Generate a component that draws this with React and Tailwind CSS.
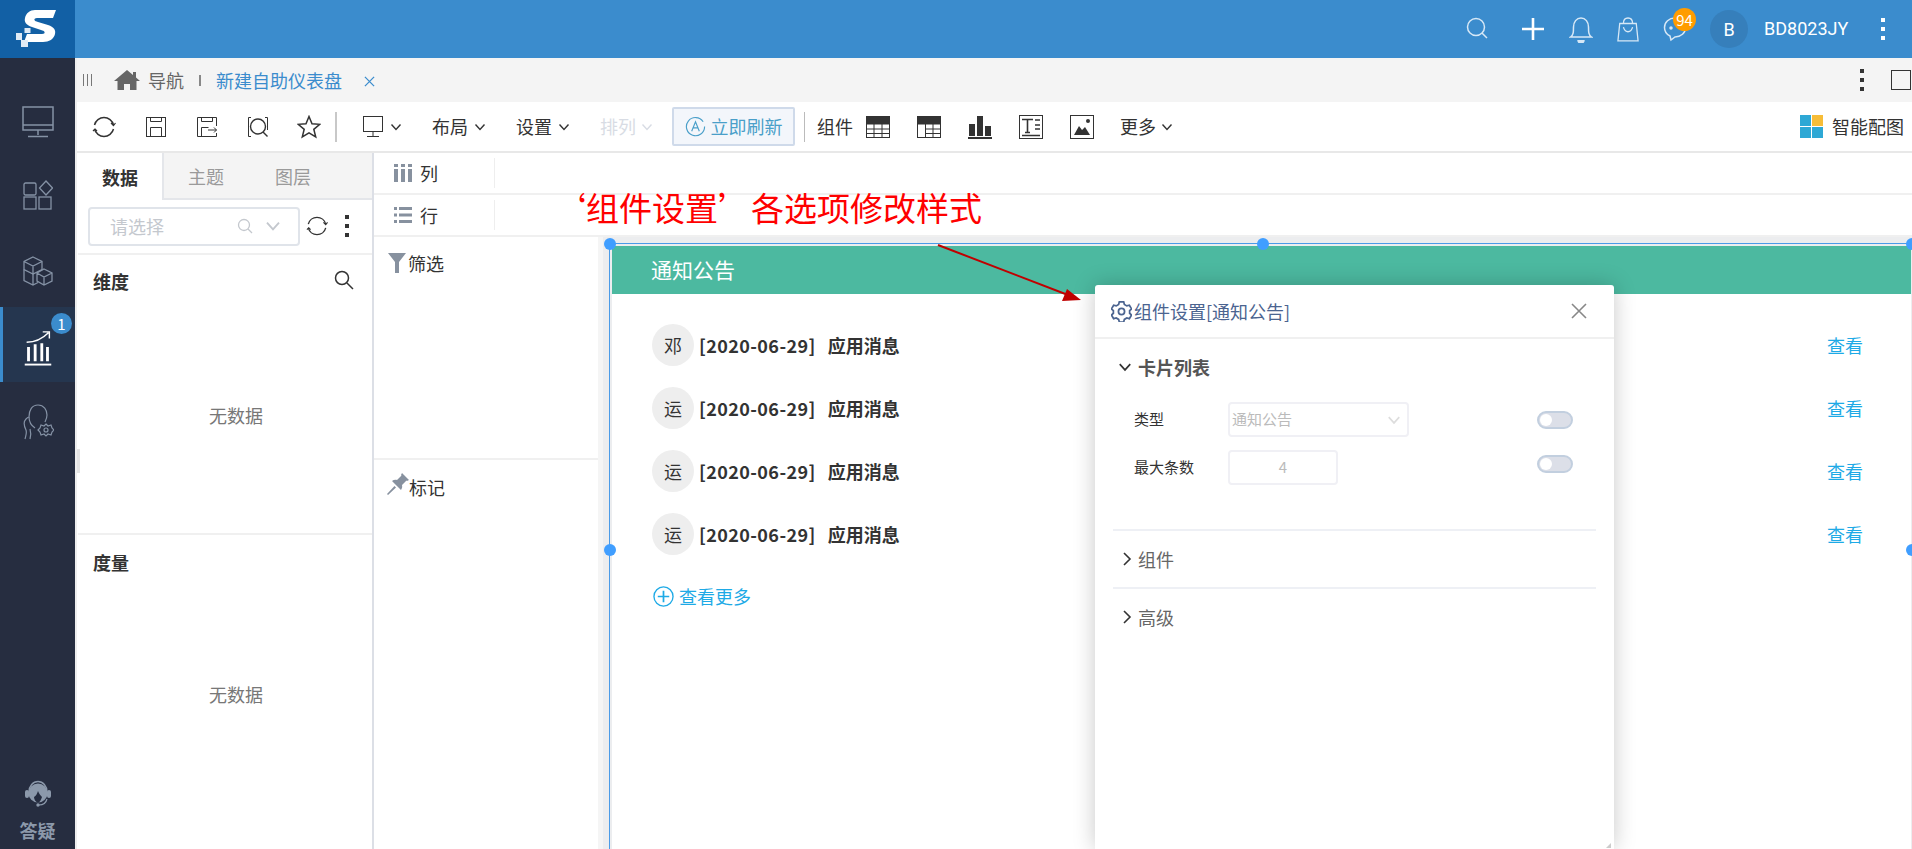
import React from 'react'

const Chevron = ({ className = 'w-[12px] h-[12px] text-[#333]' }) => (
  <svg viewBox="0 0 12 12" className={className} fill="none" stroke="currentColor" strokeWidth="1.400">
    <path d="M1.500 3.500 6 8.500l4.500-5" />
  </svg>
)

const ChevronRight = () => (
  <svg viewBox="0 0 10 14" className="w-[10px] h-[14px] text-[#333]" fill="none" stroke="currentColor" strokeWidth="1.600">
    <path d="M2 1l6 6-6 6" />
  </svg>
)

const Refresh = ({ className = 'w-[24px] h-[24px]' }) => (
  <svg viewBox="0 0 24 24" className={className} fill="none" stroke="#333" strokeWidth="1.500">
    <path d="M2.500 10A9.800 9.800 0 0 1 21.500 10" />
    <path d="M21.500 14A9.800 9.800 0 0 1 2.500 14" />
    <path d="M19 8l2.500 2.500L23.500 8M1 16l2-2 2 2" strokeWidth="1.200" />
  </svg>
)

const Dots = ({ className = 'bg-[#333]' }) => (
  <div className="flex flex-col gap-[5px]">
    <div className={`w-[4px] h-[4px] ${className}`}></div>
    <div className={`w-[4px] h-[4px] ${className}`}></div>
    <div className={`w-[4px] h-[4px] ${className}`}></div>
  </div>
)

const SaveIcon = () => (
  <svg viewBox="0 0 20 20" className="w-[20px] h-[20px]" fill="none" stroke="#333" strokeWidth="1">
    <rect x="0.500" y="0.500" width="19" height="19" />
    <path d="M4.500.5v4h11v-4M4.500 19.500v-9h11v9" />
  </svg>
)

const SaveAsIcon = () => (
  <svg viewBox="0 0 20 20" className="w-[20px] h-[20px]" fill="none" stroke="#333" strokeWidth="1">
    <path d="M19.500 9V.5H.5v19h19V16" />
    <path d="M4.500.5v4h11v-4M4.500 19.500v-9h7M11 13h8.500M17 10.500l2.500 2.500-2.500 2.500" />
  </svg>
)

const PreviewIcon = () => (
  <svg viewBox="0 0 20 20" className="w-[20px] h-[20px]" fill="none" stroke="#333" strokeWidth="1">
    <path d="M3 .5H.5v19H3M17 .5h2.500V13" />
    <circle cx="10" cy="9.500" r="7.500" strokeWidth="1.400" />
    <path d="M15 15l4.500 4.500" strokeWidth="1.400" />
  </svg>
)

const StarIcon = () => (
  <svg viewBox="0 0 24 24" className="w-[24px] h-[24px]" fill="none" stroke="#333" strokeWidth="1.500">
    <path d="M12 1.500l3 7.200 7.800.6-6 5 1.900 7.600L12 17.800l-6.700 4.100 1.900-7.600-6-5 7.800-.6z" />
  </svg>
)

const MonitorIcon = () => (
  <svg viewBox="0 0 20 21" className="w-[20px] h-[21px]" fill="none" stroke="#333" strokeWidth="1">
    <rect x="0.500" y="0.500" width="19" height="15" />
    <path d="M10 16v4M4 20.500h12" />
  </svg>
)

const TableIcon = ({ half }) => (
  <svg viewBox="0 0 24 22" className="w-[24px] h-[22px]" fill="none" stroke="#333" strokeWidth="1">
    <rect x="0.500" y="0.500" width="23" height="21" />
    <rect x="0" y="0" width="24" height="8" fill="#333" />
    {half ? (
      <path d="M8.500 8v14M8.500 13h15M8.500 17.500h15M16 8v14" />
    ) : (
      <path d="M0 13h24M0 17.500h24M8 8v14M16 8v14" />
    )}
  </svg>
)

const BarsIcon = () => (
  <svg viewBox="0 0 24 24" className="w-[24px] h-[24px]" fill="#333">
    <rect x="1" y="9" width="6" height="12" />
    <rect x="9" y="1" width="6" height="20" />
    <rect x="17" y="11" width="6" height="10" />
    <rect x="0" y="22" width="24" height="2" />
  </svg>
)

const TextIcon = () => (
  <svg viewBox="0 0 24 24" className="w-[24px] h-[24px]" fill="none" stroke="#333" strokeWidth="1">
    <rect x="0.500" y="0.500" width="23" height="23" />
    <path d="M3 4.500h11M8.500 4.500v13M6 17.500h5" strokeWidth="1.600" />
    <path d="M16 5h5M16 10h5M16 14h5M3 20.500h18" strokeWidth="1.400" />
  </svg>
)

const ImageIcon = () => (
  <svg viewBox="0 0 24 24" className="w-[24px] h-[24px]" fill="none" stroke="#333" strokeWidth="1">
    <rect x="0.500" y="0.500" width="23" height="23" />
    <path d="M4 20l5-9 3 4 3-3 5 8z" fill="#333" stroke="none" />
    <circle cx="18" cy="6" r="2" fill="#333" stroke="none" />
  </svg>
)

const Toggle = ({ className = '' }) => (
  <div className={`w-[36px] h-[18px] rounded-full border-2 border-[#c2cfdf] bg-[#dcdfe8] flex items-center ${className}`}>
    <div className="w-[12px] h-[12px] ml-[1px] rounded-full bg-white"></div>
  </div>
)

const NavItem = ({ children, className = '' }) => (
  <div className={`h-[75px] flex items-center justify-center ${className}`}>{children}</div>
)

const handleClass = 'absolute w-[12px] h-[12px] rounded-full bg-[#409eff]'
const rows = ['邓', '运', '运', '运']

export default function App() {
  return (
    <div className="relative w-[1912px] h-[849px] overflow-hidden flex flex-col bg-white text-[18px] text-[#333] font-['Noto_Sans_CJK_SC','Liberation_Sans',sans-serif]">
      {/* Top bar */}
      <div className="h-[58px] flex items-center bg-[#3b8ccd] shrink-0">
        <div className="w-[75px] h-[58px] bg-[#1260a5] flex items-start pl-[15px] pt-[10px]">
          <svg viewBox="0 0 44 38" className="w-[44px] h-[38px]">
            <path d="M20 0H41L38 8H22C20 8 19 9 19.500 10 20 11 21 11.500 23 12L33 15C39 17 41 20 40 24 39 29 34 32 28 32H9L12 24H27C29 24 30 23 29.500 22 29 21 28 20.500 26 20L17 17C11 15 9 12 10 8 11 3 15 0 20 0Z" fill="#fff" />
            <path d="M9.500 18h6v5h-6zM1 23h6v7H1zM6 30h7v7H6z" fill="#dfeaf5" />
          </svg>
        </div>
        <div className="ml-auto flex items-center text-white">
          <svg viewBox="0 0 24 24" className="w-[24px] h-[24px] mr-[32px] mb-[2px]" fill="none" stroke="#d7e8f6" strokeWidth="1.500">
            <circle cx="11" cy="11" r="8.500" />
            <path d="M17 17l5 5" />
          </svg>
          <svg viewBox="0 0 24 24" className="w-[24px] h-[24px] mr-[24px]" fill="none" stroke="#fff" strokeWidth="2.600">
            <path d="M12 1v22M1 12h22" />
          </svg>
          <svg viewBox="0 0 24 28" className="w-[24px] h-[28px] mr-[24px]" fill="none" stroke="#d7e8f6" strokeWidth="1.500">
            <path d="M1.500 22c3-2 3-5 3-10 0-5 3-9 7.500-9s7.500 4 7.500 9c0 5 0 8 3 10z" />
            <path d="M9 25a3 3 0 0 0 6 0" fill="#d7e8f6" />
          </svg>
          <svg viewBox="0 0 24 28" className="w-[22px] h-[28px] mr-[24px]" fill="none" stroke="#d7e8f6" strokeWidth="1.400">
            <path d="M3 8h18l2 19H1z" />
            <path d="M7 8c0-4 2-6 5-6s5 2 5 6M7 12c1 4 3 5 5 5s4-1 5-5" />
          </svg>
          <div className="relative w-[24px] h-[28px] flex items-center mr-[22px]">
            <svg viewBox="0 0 24 26" className="w-[24px] h-[26px]" fill="none" stroke="#d7e8f6" strokeWidth="1.500">
              <path d="M12 2C6 2 1.500 6 1.500 11.500c0 4 2.500 7 5.500 8.500l1 4 4-3c6 0 10.500-4 10.500-9.500S18 2 12 2z" />
              <circle cx="8" cy="12" r="1" fill="#d7e8f6" />
            </svg>
            <div className="absolute left-[10px] -top-[7px] w-[23px] h-[23px] rounded-full bg-[#ff9c00] flex items-center justify-center text-[15px] leading-none text-white">94</div>
          </div>
          <div className="w-[38px] h-[38px] rounded-full bg-[#367fbb] flex items-center justify-center text-[18px] ml-[1px] font-['Roboto',sans-serif]">B</div>
          <div className="ml-[16px] w-[86px] text-[18px] leading-none whitespace-nowrap font-['Roboto',sans-serif]">BD8023JY</div>
          <div className="ml-[31px] mr-[27px]"><Dots className="bg-white" /></div>
        </div>
      </div>

      <div className="flex flex-1 min-h-0">
        {/* Left nav */}
        <div className="w-[75px] bg-[#262d40] flex flex-col shrink-0 pt-[26px]">
          <NavItem>
            <svg viewBox="0 0 32 34" className="w-[32px] h-[34px]" fill="none" stroke="#8592a5" strokeWidth="1.500">
              <rect x="1" y="2" width="30" height="23" />
              <path d="M1 20h30M16 25v5M6 31.500h20" />
            </svg>
          </NavItem>
          <NavItem className="mt-[-2px]">
            <svg viewBox="0 0 30 30" className="w-[30px] h-[30px]" fill="none" stroke="#8592a5" strokeWidth="1.300">
              <rect x="1" y="3" width="12" height="12" rx="1.500" />
              <path d="M23 1l6.500 7-6.500 7-6.500-7z" />
              <rect x="1" y="17" width="12" height="12" />
              <rect x="16" y="17" width="12" height="12" />
            </svg>
          </NavItem>
          <NavItem className="mt-[1px] mb-[-1px]">
            <svg viewBox="0 0 32 32" className="w-[32px] h-[32px]" fill="none" stroke="#8592a5" strokeWidth="1.300">
              <path d="M11 2l9 4.500v8L11 19l-9-4.500v-8zM2 6.500l9 4.500 9-4.500M11 11v8" />
              <path d="M2 14.500v11L11 30l5-2.500M11 19v11" />
              <path d="M22 14l8 4v8l-8 4-7-4v-8zM15 18l7 4 8-4M22 22v8" />
            </svg>
          </NavItem>
          <div className="relative h-[75px] bg-[#25364f] border-l-[3px] border-[#3b8ccd] flex items-center justify-center">
            <svg viewBox="0 0 30 38" className="w-[30px] h-[36px] mt-[6px] mr-[3px]" fill="none" stroke="#fff" strokeWidth="1.500">
              <path d="M3 13c8 0 16-3 23-10M20 2h7v7" />
              <path d="M5 33V18M12 33V15M19 33V14M25 33V18" strokeWidth="3" />
              <path d="M1 36.500h28" strokeWidth="2" />
            </svg>
            <div className="absolute left-[48px] top-[6px] w-[21px] h-[21px] rounded-full bg-[#3b8ccd] text-white text-[15px] leading-none flex items-center justify-center">1</div>
          </div>
          <NavItem className="mt-[2px]">
            <svg viewBox="0 0 32 38" className="w-[32px] h-[38px]" fill="none" stroke="#8592a5" strokeWidth="1.200">
              <path d="M3 36c1-4 2-6 1-9-2-4-3-8 0-11 1-1 2-2 3-2 0-7 3-12 9-12 6 0 9 5 9 10 0 3-1 5-2 7" />
              <path d="M8 36c1-4 1-7 0-10M7 14c0 5 3 9 6 11" />
              <path d="M24 21l2 2 3-1 1 3 2 2-2 2-1 3-3-1-2 2-2-2-3 1-1-3-2-2 2-2 1-3 3 1z" />
              <circle cx="24" cy="27" r="2" />
            </svg>
          </NavItem>
          <div className="mt-auto flex flex-col items-center pb-[7px] text-[#8c99ab]">
            <svg viewBox="0 0 26 27" className="w-[26px] h-[27px]">
              <path d="M4 12a9 10.500 0 0 1 18 0" fill="none" stroke="#8c99ab" strokeWidth="1.400" />
              <circle cx="13" cy="13" r="9.500" fill="#8c99ab" />
              <rect x="0" y="10" width="4" height="8" rx="2" fill="#8c99ab" />
              <rect x="22" y="10" width="4" height="8" rx="2" fill="#8c99ab" />
              <path d="M13 11c1 3 3 5 4 6-1 3-2 5-4 6-2-1-4-3-4-6 2-1 3-3 4-6z" fill="#262d40" />
              <path d="M22 19c-1 4-4 6-8 6" fill="none" stroke="#8c99ab" strokeWidth="1.200" />
              <circle cx="13" cy="25" r="1.700" fill="#8c99ab" />
            </svg>
            <div className="font-bold text-[18px] leading-[24px] mt-[11px]">答疑</div>
          </div>
        </div>

        <div className="flex-1 min-w-0 flex flex-col border-l-[2px] border-[#eeeeee]">
          {/* Tab strip */}
          <div className="h-[44px] bg-[#f4f4f4] flex items-center shrink-0">
            <div className="ml-[6px] flex gap-[3px]">
              <div className="w-[1px] h-[12px] bg-[#777]"></div>
              <div className="w-[1px] h-[12px] bg-[#777]"></div>
              <div className="w-[1px] h-[12px] bg-[#777]"></div>
            </div>
            <svg viewBox="0 0 26 20" className="w-[26px] h-[20px] ml-[22px]" fill="#666">
              <path d="M13 0L0 11h3.500v9H10v-6h6v6h6.500v-9H26l-4-3.500V2h-3v3z" />
            </svg>
            <span className="ml-[8px] text-[#666]">导航</span>
            <div className="w-[2px] h-[11px] bg-[#888] ml-[15px]"></div>
            <span className="ml-[15px] text-[#3b8ccd] whitespace-nowrap">新建自助仪表盘</span>
            <svg viewBox="0 0 12 12" className="w-[11px] h-[11px] ml-[22px] mt-[2px]" fill="none" stroke="#3b8ccd" strokeWidth="1.400">
              <path d="M1 1l10 10M11 1L1 11" />
            </svg>
            <div className="ml-auto"><Dots /></div>
            <div className="w-[20px] h-[20px] border border-[#333] ml-[27px] mr-[1px]"></div>
          </div>

          {/* Toolbar */}
          <div className="h-[51px] flex items-center border-b-[2px] border-[#e8e8e8] shrink-0">
            <div className="ml-[15px]"><Refresh /></div>
            <div className="ml-[30px]"><SaveIcon /></div>
            <div className="ml-[31px]"><SaveAsIcon /></div>
            <div className="ml-[31px]"><PreviewIcon /></div>
            <div className="ml-[29px]"><StarIcon /></div>
            <div className="w-[2px] h-[30px] bg-[#c8c8c8] ml-[14px]"></div>
            <div className="ml-[26px]"><MonitorIcon /></div>
            <div className="ml-[7px]"><Chevron /></div>
            <span className="ml-[30px]">布局</span>
            <div className="ml-[6px]"><Chevron /></div>
            <span className="ml-[30px]">设置</span>
            <div className="ml-[6px]"><Chevron /></div>
            <span className="ml-[30px] text-[#d8dce4]">排列</span>
            <div className="ml-[5px]"><Chevron className="w-[12px] h-[12px] text-[#d8dce4]" /></div>
            <div className="ml-[19px] w-[123px] h-[39px] rounded-[2px] bg-[#f3f6fb] border-2 border-[#cfdaea] flex items-center justify-center gap-[5px] text-[#4a9fc9]">
              <svg viewBox="0 0 22 22" className="w-[21px] h-[21px]" fill="none" stroke="#4a9fc9" strokeWidth="1.200">
                <path d="M19 6a9.500 9.500 0 1 0 1.500 5" />
                <path d="M7 16l4-10 4 10M8.500 12.500h5" />
              </svg>
              <span className="whitespace-nowrap">立即刷新</span>
            </div>
            <div className="w-[1px] h-[30px] bg-[#bbb] ml-[9px]"></div>
            <span className="ml-[12px]">组件</span>
            <div className="ml-[13px]"><TableIcon /></div>
            <div className="ml-[27px]"><TableIcon half /></div>
            <div className="ml-[27px]"><BarsIcon /></div>
            <div className="ml-[27px]"><TextIcon /></div>
            <div className="ml-[27px]"><ImageIcon /></div>
            <span className="ml-[26px]">更多</span>
            <div className="ml-[5px]"><Chevron /></div>
            <div className="ml-auto flex items-center gap-[9px] mr-[8px]">
              <div className="grid grid-cols-2 gap-[1px] w-[23px] h-[23px]">
                <div className="bg-[#2ea8d5]"></div>
                <div className="bg-[#f7bd38]"></div>
                <div className="bg-[#2ea8d5]"></div>
                <div className="bg-[#2ea8d5]"></div>
              </div>
              <span className="whitespace-nowrap">智能配图</span>
            </div>
          </div>

          <div className="flex-1 min-h-0 flex">
            {/* Data panel */}
            <div className="relative w-[297px] shrink-0 border-r-[2px] border-[#dcdfe6] flex flex-col pl-[1px]">
              <div className="absolute left-0 top-[296px] w-[3px] h-[24px] bg-[#e4e4e4]"></div>
              <div className="h-[47px] flex shrink-0">
                <div className="w-[86px] border-r-2 border-[#e4e6ea] flex items-center justify-center font-bold pt-[2px]">数据</div>
                <div className="flex-1 bg-[#f4f4f4] border-b-2 border-[#e4e6ea] flex items-center text-[#9a9a9a] pt-[2px]">
                  <span className="ml-[24px]">主题</span>
                  <span className="ml-[51px]">图层</span>
                </div>
              </div>
              <div className="h-[55px] border-b-2 border-[#f0f0f0] flex items-center shrink-0 pb-[1px]">
                <div className="ml-[10px] w-[212px] h-[39px] rounded-[4px] border-2 border-[#e0e4ea] flex items-center text-[#c4c8ce]">
                  <span className="ml-[20px]">请选择</span>
                  <svg viewBox="0 0 16 16" className="w-[16px] h-[16px] ml-[73px]" fill="none" stroke="#c4c8ce" strokeWidth="1.300">
                    <circle cx="7" cy="7" r="5.500" />
                    <path d="M11 11l4 4" />
                  </svg>
                  <Chevron className="w-[16px] h-[16px] ml-[12px] text-[#c4c8ce]" />
                </div>
                <div className="ml-[6px]"><Refresh className="w-[22px] h-[22px]" /></div>
                <div className="ml-[17px]"><Dots /></div>
              </div>
              <div className="h-[280px] relative border-b-2 border-[#f0f0f0] shrink-0 flex items-center justify-center text-[#777]">
                <div className="absolute left-[15px] top-[13px] font-bold text-[#333]">维度</div>
                <svg viewBox="0 0 20 20" className="absolute right-[18px] top-[15px] w-[20px] h-[20px]" fill="none" stroke="#333" strokeWidth="1.500">
                  <circle cx="8" cy="8" r="6.500" />
                  <path d="M13 13l6 6" />
                </svg>
                <span className="mt-[42px] ml-[22px]">无数据</span>
              </div>
              <div className="flex-1 relative flex items-center justify-center text-[#777]">
                <div className="absolute left-[15px] top-[14px] font-bold text-[#333]">度量</div>
                <span className="mt-[5px] ml-[22px]">无数据</span>
              </div>
            </div>

            <div className="flex-1 min-w-0 flex flex-col">
              {/* Shelves */}
              <div className="h-[42px] border-b-2 border-[#f0f0f0] flex items-center shrink-0">
                <svg viewBox="0 0 18 18" className="w-[18px] h-[18px] ml-[20px]" fill="#87919f">
                  <rect x="0" y="0" width="4" height="3" />
                  <rect x="0" y="5" width="4" height="13" />
                  <rect x="7" y="0" width="4" height="3" />
                  <rect x="7" y="5" width="4" height="13" />
                  <rect x="14" y="0" width="4" height="3" />
                  <rect x="14" y="5" width="4" height="13" />
                </svg>
                <span className="ml-[8px]">列</span>
                <div className="w-[1px] h-[30px] bg-[#eeeeee] ml-[56px]"></div>
              </div>
              <div className="h-[42px] border-b-2 border-[#f0f0f0] flex items-center shrink-0">
                <svg viewBox="0 0 18 18" className="w-[18px] h-[18px] ml-[20px]" fill="#87919f">
                  <rect x="0" y="1" width="3" height="3" />
                  <rect x="5" y="1" width="13" height="3" />
                  <rect x="0" y="7.500" width="3" height="3" />
                  <rect x="5" y="7.500" width="13" height="3" />
                  <rect x="0" y="14" width="3" height="3" />
                  <rect x="5" y="14" width="13" height="3" />
                </svg>
                <span className="ml-[8px]">行</span>
                <div className="w-[1px] h-[30px] bg-[#eeeeee] ml-[56px]"></div>
              </div>

              <div className="flex-1 min-h-0 flex">
                {/* Filter and mark cards */}
                <div className="w-[224px] shrink-0 flex flex-col">
                  <div className="h-[223px] border-b-2 border-[#f0f0f0] shrink-0 flex items-start pt-[13px] pl-[14px]">
                    <svg viewBox="0 0 18 20" className="w-[18px] h-[20px] mt-[3px]" fill="#87919f">
                      <path d="M0 0h18l-7 9v11H7V9z" />
                    </svg>
                    <span className="ml-[2px]">筛选</span>
                  </div>
                  <div className="flex items-start pt-[13px] pl-[13px]">
                    <svg viewBox="0 0 22 22" className="w-[22px] h-[22px]" fill="#87919f">
                      <path d="M15 0L22 7 20 8 19.500 7.500 15 12C15.500 14 15 15.500 14 17L5 8C6.500 7 8 6.500 10 7L14.500 2.500 14 2ZM7.500 13L9 14.500 1 22 0 21Z" />
                    </svg>
                    <span className="mt-[1px]">标记</span>
                  </div>
                </div>

                {/* Canvas */}
                <div className="relative flex-1 min-w-0 bg-[#ecedef] border-l-[5px] border-[#f5f5f5] pl-[6px] pt-[6px]">
                  <div className="relative h-[700px] border-t border-l border-[#4a9be8] pt-[2px] pl-[2px] pr-[1px]">
                    <div className="h-full bg-white">
                      <div className="h-[48px] bg-[#4cb9a0] text-white text-[21px] flex items-center pl-[39px]">通知公告</div>
                      <div className="pl-[40px] pr-[48px] pt-[30px]">
                        {rows.map((name, i) => (
                          <div key={i} className="h-[42px] mb-[21px] flex items-center">
                            <div className="w-[42px] h-[42px] rounded-full bg-[#eeeeee] flex items-center justify-center">{name}</div>
                            <span className="ml-[5px] font-bold whitespace-nowrap tracking-[0.4px]">[2020-06-29]</span>
                            <span className="ml-[12px] font-bold whitespace-nowrap">应用消息</span>
                            <span className="ml-auto text-[#1eaae6]">查看</span>
                          </div>
                        ))}
                        <div className="flex items-center text-[#1eaae6] mt-[28px]">
                          <svg viewBox="0 0 22 22" className="w-[21px] h-[21px] ml-[1px]" fill="none" stroke="#1eaae6" strokeWidth="1.400">
                            <circle cx="11" cy="11" r="10" />
                            <path d="M11 5v12M5 11h12" strokeWidth="1.800" />
                          </svg>
                          <span className="ml-[5px]">查看更多</span>
                        </div>
                      </div>
                    </div>
                    <div className={`${handleClass} -left-[6px] -top-[6px]`}></div>
                    <div className={`${handleClass} left-[647px] -top-[6px]`}></div>
                    <div className={`${handleClass} -right-[6px] -top-[6px]`}></div>
                    <div className={`${handleClass} -left-[6px] top-[300px]`}></div>
                    <div className={`${handleClass} -right-[6px] top-[300px]`}></div>
                  </div>

                  {/* Settings dialog */}
                  <div className="absolute left-[492px] top-[48px] w-[519px] h-[564px] bg-white rounded-t-[3px] shadow-[0_0_22px_rgba(0,0,0,0.22)]">
                    <div className="h-[54px] border-b-2 border-[#f0f0f0] flex items-center">
                      <svg viewBox="0 0 24 24" className="w-[21px] h-[21px] ml-[16px]" fill="none" stroke="#4b6490" strokeWidth="2">
                        <path d="M9.500 2h5l.8 3 2.700 1.600 3-.8 2.500 4.200-2.200 2 0 3 2.200 2-2.500 4.200-3-.8-2.700 1.600-.8 3h-5l-.8-3-2.700-1.600-3 .8L.5 17l2.200-2v-3L.5 10 3 5.800l3 .8 2.700-1.600z" transform="translate(0 -1)" />
                        <circle cx="12" cy="12" r="3.500" />
                      </svg>
                      <span className="ml-[2px] text-[#4b6490] whitespace-nowrap">组件设置[通知公告]</span>
                      <svg viewBox="0 0 16 16" className="w-[16px] h-[16px] ml-auto mr-[27px]" fill="none" stroke="#888" strokeWidth="1.600">
                        <path d="M1 1l14 14M15 1L1 15" />
                      </svg>
                    </div>
                    <div className="h-[28px] mt-[14px] flex items-center font-bold text-[#555]">
                      <Chevron className="w-[14px] h-[14px] ml-[23px] text-[#333]" />
                      <span className="ml-[6px]">卡片列表</span>
                    </div>
                    <div className="h-[35px] mt-[21px] flex items-center text-[15px] pl-[39px]">
                      <span className="w-[94px]">类型</span>
                      <div className="w-[181px] h-[35px] rounded-[4px] border-2 border-[#f0f0f5] flex items-center justify-between text-[#bbbbbb] pl-[2px] pr-[6px]">
                        <span>通知公告</span>
                        <Chevron className="w-[14px] h-[14px] text-[#dddddd]" />
                      </div>
                      <Toggle className="ml-auto mr-[41px]" />
                    </div>
                    <div className="h-[35px] mt-[13px] flex items-center text-[15px] pl-[39px]">
                      <span className="w-[94px]">最大条数</span>
                      <div className="w-[110px] h-[35px] rounded-[4px] border-2 border-[#f0f0f5] flex items-center justify-center text-[#bbbbbb]">4</div>
                      <Toggle className="ml-auto mr-[41px] mb-[7px]" />
                    </div>
                    <div className="ml-[18px] mr-[18px] mt-[44px] border-t-2 border-[#eef0f5] h-[58px] flex items-center text-[#666]">
                      <div className="ml-[9px]"><ChevronRight /></div>
                      <span className="ml-[6px]">组件</span>
                    </div>
                    <div className="ml-[18px] mr-[18px] border-t-2 border-[#eef0f5] h-[58px] flex items-center text-[#666]">
                      <div className="ml-[9px]"><ChevronRight /></div>
                      <span className="ml-[6px]">高级</span>
                    </div>
                    <div className="absolute right-[3px] bottom-[1px] w-0 h-0 border-l-[5px] border-b-[5px] border-l-transparent border-b-[#ccc]"></div>
                  </div>
                </div>
              </div>
            </div>
          </div>
        </div>
      </div>

      {/* Annotation over the page */}
      <div className="absolute left-[553px] top-[184px] text-[33px] leading-[46px] text-[#ff0000] whitespace-nowrap">‘组件设置’各选项修改样式</div>
      <svg viewBox="0 0 150 60" className="absolute left-[935px] top-[243px] w-[150px] h-[60px]">
        <path d="M3 2l130 50" stroke="#c00000" strokeWidth="2" fill="none" />
        <path d="M146 57l-19 1 5-12z" fill="#c00000" />
      </svg>
    </div>
  )
}
